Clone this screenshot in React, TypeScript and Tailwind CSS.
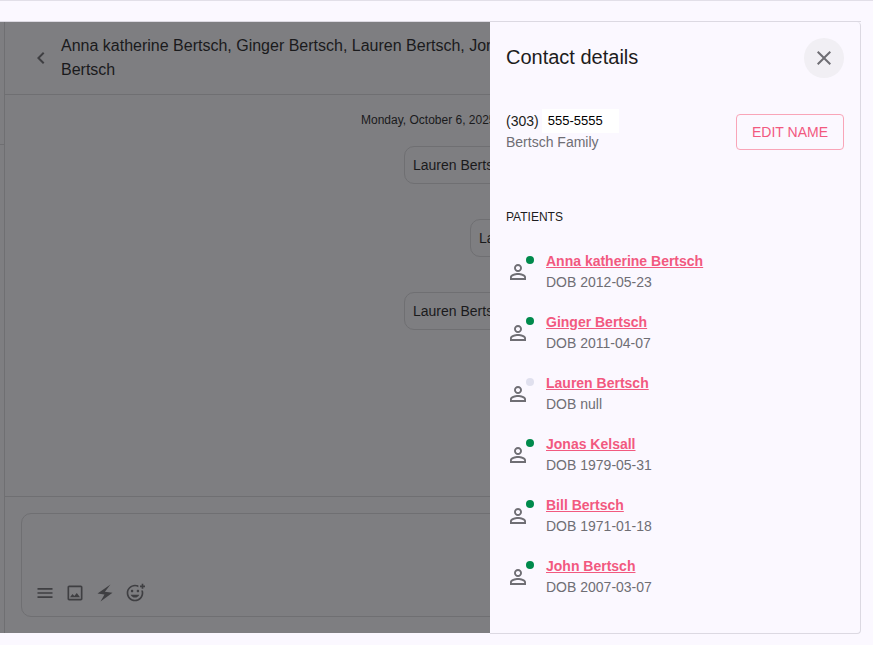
import { MdChevronLeft, MdClose, MdMenu, MdOutlineImage, MdOutlineAddReaction } from "react-icons/md";

const patients = [
  { name: "Anna katherine Bertsch", dob: "2012-05-23", active: true },
  { name: "Ginger Bertsch", dob: "2011-04-07", active: true },
  { name: "Lauren Bertsch", dob: "null", active: false },
  { name: "Jonas Kelsall", dob: "1979-05-31", active: true },
  { name: "Bill Bertsch", dob: "1971-01-18", active: true },
  { name: "John Bertsch", dob: "2007-03-07", active: true },
];

function PersonIcon() {
  return (
    <svg viewBox="0 0 24 24" className="h-6 w-6 fill-[#6f6e74]">
      <path d="M12 5.9c1.16 0 2.1.94 2.1 2.1s-.94 2.1-2.1 2.1S9.9 9.16 9.9 8s.94-2.1 2.1-2.1m0 9c2.97 0 6.1 1.46 6.1 2.1v1.1H5.9V17c0-.64 3.13-2.1 6.1-2.1M12 4C9.79 4 8 5.79 8 8s1.79 4 4 4 4-1.79 4-4-1.79-4-4-4zm0 9c-2.67 0-8 1.34-8 4v3h16v-3c0-2.66-5.33-4-8-4z" />
    </svg>
  );
}

function BoltIcon() {
  return (
    <svg viewBox="0 0 20 20" className="h-5 w-5 fill-[#3f3f42]">
      <path d="M15.5 1.5 2.5 10.5l7 .9L5.5 18.5 17.5 9.8l-7.6-1z" />
    </svg>
  );
}

function Bubble({ indent }: { indent: string }) {
  return (
    <div className={`h-[38px] w-[300px] rounded-[10px] border border-[#6f6f72] pl-2 flex items-center text-sm text-[#1a1a1c] ${indent}`}>
      Lauren Bertsch
    </div>
  );
}

export default function App() {
  return (
    <div className="h-[645px] w-[873px] overflow-hidden bg-[#fbf8ff] border-t border-[#e2dfe8] pt-[20px] font-['Liberation_Sans',Arial,sans-serif]">
      <div className="flex h-[613px] w-[861px] border-t border-[#dcd9e2]">
        <div className="flex h-[611px] w-[490px] overflow-hidden bg-[#7e7e81]">
          <div className="w-[5px] shrink-0 border-r border-[#6f6f72]">
            <div className="h-[123px] border-b border-[#6f6f72]" />
          </div>
          <div className="flex w-[840px] shrink-0 flex-col">
            <div className="flex h-[73px] shrink-0 items-center border-b border-[#6f6f72] pl-[24px]">
              <MdChevronLeft className="h-6 w-6 shrink-0 text-[#3f3f42]" />
              <div className="ml-2 w-[640px] text-base leading-6 text-[#1a1a1c]">
                Anna katherine Bertsch, Ginger Bertsch, Lauren Bertsch, Jonas Kelsall, Bill Bertsch, John
                <br />
                Bertsch
              </div>
            </div>
            <div className="flex-1 pt-[17px]">
              <div className="ml-[356px] text-xs leading-[16px] text-[#1a1a1c]">Monday, October 6, 2025</div>
              <div className="mt-[18px] flex flex-col gap-[35px]">
                <Bubble indent="ml-[399px]" />
                <Bubble indent="ml-[465px]" />
                <Bubble indent="ml-[399px]" />
              </div>
            </div>
            <div className="h-[137px] shrink-0 border-t border-[#6f6f72] pl-4 pt-4">
              <div className="flex h-[104px] w-[700px] items-end gap-[10px] rounded-[10px] border border-[#6f6f72] pb-[13px] pl-[13px]">
                <MdMenu className="h-5 w-5 text-[#3f3f42]" />
                <MdOutlineImage className="h-5 w-5 text-[#3f3f42]" />
                <BoltIcon />
                <MdOutlineAddReaction className="h-5 w-5 text-[#3f3f42]" />
              </div>
            </div>
          </div>
        </div>

        <div className="h-full w-[371px] rounded-tr-[4px] rounded-br-[4px] border-r border-b border-[#dcd9e2] pl-4 pr-4 pt-4">
          <div className="flex h-10 items-center justify-between">
            <h2 className="pb-[2px] text-xl text-[#1d1c20]">Contact details</h2>
            <button className="flex h-10 w-10 items-center justify-center rounded-full bg-[#f1eff4]">
              <MdClose className="h-6 w-6 text-[#6f6e74]" />
            </button>
          </div>
          <div className="mt-[31px] flex items-start justify-between">
            <div>
              <div className="flex items-center text-sm text-[#1d1c20]">
                <span>(303)</span>
                <span className="ml-[3px] flex h-6 w-[77px] items-center bg-white pl-[6px] text-[13px] text-black">555-5555</span>
              </div>
              <div className="text-sm leading-[18px] text-[#6f6e74]">Bertsch Family</div>
            </div>
            <button className="mt-[5px] h-9 w-[108px] rounded-[4px] border border-[#f9a5b8] text-sm text-[#f2597f]">EDIT NAME</button>
          </div>
          <div className="mt-[58px] text-xs leading-4 text-[#1d1c20]">PATIENTS</div>
          <div className="mt-[26px] flex flex-col gap-[19px]">
            {patients.map((p) => (
              <div key={p.name} className="flex h-[42px] items-center">
                <div className="relative h-6 w-6">
                  <PersonIcon />
                  <span className={`absolute -right-[4px] -top-[4px] h-2 w-2 rounded-full ${p.active ? "bg-[#008a4c]" : "bg-[#e0e0ee]"}`} />
                </div>
                <div className="ml-4">
                  <div className="text-sm font-semibold leading-[21px] text-[#f2597f] underline">{p.name}</div>
                  <div className="text-sm leading-[21px] text-[#6f6e74]">DOB {p.dob}</div>
                </div>
              </div>
            ))}
          </div>
        </div>
      </div>
    </div>
  );
}
